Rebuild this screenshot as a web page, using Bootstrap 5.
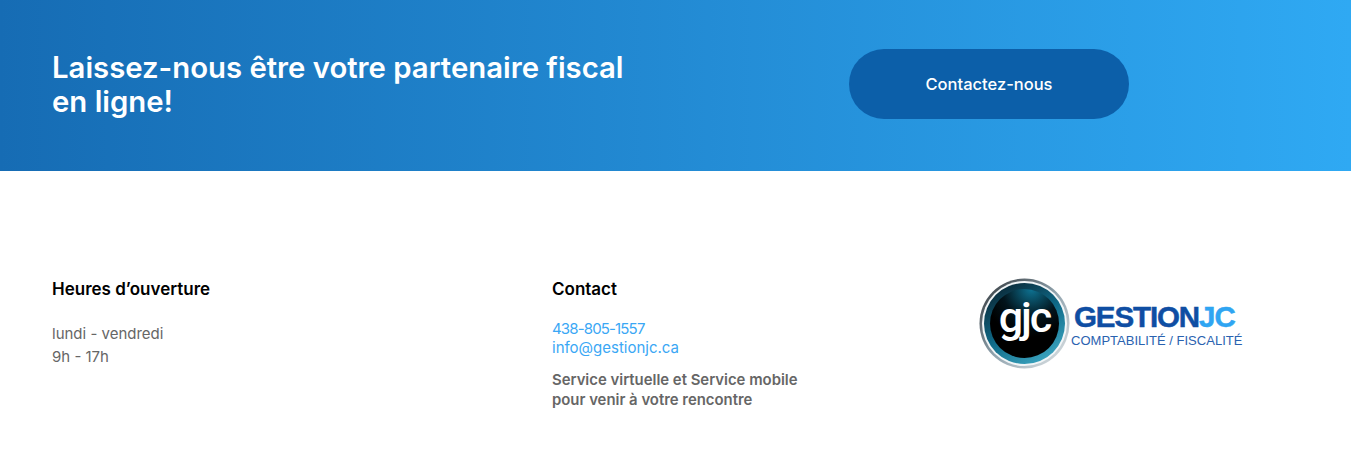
<!DOCTYPE html>
<html lang="fr">
<head>
    <meta charset="UTF-8">
    <meta name="viewport" content="width=device-width, initial-scale=1.0">
    <title>Gestion JC</title>
    <link href="https://cdn.jsdelivr.net/npm/bootstrap@5.3.0/dist/css/bootstrap.min.css" rel="stylesheet">
    <style>
        body {
            font-family: Inter, "Open Sans", "Liberation Sans", sans-serif;
            background: #fff;
            color: #666;
            overflow: hidden;
        }
        .cta-band {
            height: 171px;
            padding: 0 0 3px 52px;
            background: linear-gradient(90deg, #166cb4 0%, #2fa9f3 100%);
        }
        .cta-title-col { width: 797px; padding-top: 2px; }
        .cta-title {
            width: 590px;
            margin: 0;
            color: #fff;
            font-size: 29.3px;
            font-weight: 600;
            line-height: 34px;
        }
        .cta-btn {
            width: 280px;
            height: 70px;
            border: 0;
            border-radius: 35px;
            background: #0c5fa9;
            color: #fff;
            font-size: 16.5px;
            font-weight: 500;
        }
        .foot-area {
            padding: 108px 0 0 52px;
        }
        .foot-hours { width: 500px; }
        .foot-contact { width: 427px; }
        .foot-title {
            margin: 0;
            color: #000;
            font-size: 17px;
            font-weight: 600;
            line-height: 20px;
        }
        .foot-text {
            margin-top: 23px;
            font-size: 15px;
            line-height: 23px;
        }
        .foot-links { margin-top: 20px; }
        .foot-links a {
            display: block;
            color: #3aa7f5;
            font-size: 15px;
            line-height: 19px;
            text-decoration: none;
        }
        .foot-phone { letter-spacing: -.85px; }
        .foot-note {
            margin-top: 13px;
            font-size: 14.9px;
            font-weight: 600;
            line-height: 20px;
        }
        .logo-box {
            margin-top: -1px;
            font-family: "Liberation Sans", Arial, sans-serif;
        }
        .logo-copy { padding-top: 23px; margin-left: 1px; }
        .logo-name {
            margin-left: 3px;
            color: #0f4ea3;
            font-size: 29.5px;
            font-weight: 700;
            line-height: 31px;
            letter-spacing: -1.1px;
            -webkit-text-stroke: .5px currentColor;
        }
        .logo-name span { color: #2fa5f2; }
        .logo-tag {
            margin-top: 1px;
            color: #2a62b0;
            font-size: 13px;
            line-height: 16px;
            letter-spacing: .02px;
        }
    </style>
</head>
<body>
    <section class="cta-band d-flex align-items-center">
        <div class="cta-title-col">
            <h2 class="cta-title">Laissez-nous être votre partenaire fiscal en ligne!</h2>
        </div>
        <button class="cta-btn" type="button">Contactez-nous</button>
    </section>

    <footer class="foot-area d-flex align-items-start">
        <div class="foot-hours">
            <h3 class="foot-title">Heures d’ouverture</h3>
            <p class="foot-text mb-0">lundi - vendredi<br>9h - 17h</p>
        </div>
        <div class="foot-contact">
            <h3 class="foot-title">Contact</h3>
            <div class="foot-links">
                <a class="foot-phone" href="#">438-805-1557</a>
                <a href="#">info@gestionjc.ca</a>
            </div>
            <p class="foot-note mb-0">Service virtuelle et Service mobile<br>pour venir à votre rencontre</p>
        </div>
        <div class="logo-box d-flex align-items-start">
            <svg width="91" height="92" viewBox="0 0 91 92" role="img" aria-label="gjc" class="flex-shrink-0">
                <defs>
                    <linearGradient id="ringOuter" x1="0" y1="0" x2="1" y2="1">
                        <stop offset="0" stop-color="#2b2f33"/>
                        <stop offset=".5" stop-color="#8fa2ad"/>
                        <stop offset="1" stop-color="#e4e8ea"/>
                    </linearGradient>
                    <linearGradient id="ringBlue" x1=".2" y1="0" x2=".8" y2="1">
                        <stop offset="0" stop-color="#0a2634"/>
                        <stop offset=".5" stop-color="#0f6a88"/>
                        <stop offset="1" stop-color="#3fa9c4"/>
                    </linearGradient>
                    <radialGradient id="discFill" cx=".6" cy="0" r=".7">
                        <stop offset="0" stop-color="#0e7393"/>
                        <stop offset=".6" stop-color="#02141c"/>
                        <stop offset="1" stop-color="#000"/>
                    </radialGradient>
                </defs>
                <circle cx="45.5" cy="45.5" r="45" fill="url(#ringOuter)"/>
                <circle cx="45.5" cy="45.5" r="42.5" fill="#f1f5f7"/>
                <circle cx="45.5" cy="45.5" r="40.5" fill="url(#ringBlue)"/>
                <circle cx="45.5" cy="45.5" r="34.5" fill="url(#discFill)"/>
                <text x="45.5" y="54" text-anchor="middle" fill="#fff" font-family="Roboto, sans-serif" font-size="43" font-weight="500" letter-spacing="-2">gjc</text>
            </svg>
            <div class="logo-copy text-nowrap">
                <div class="logo-name">GESTION<span>JC</span></div>
                <div class="logo-tag">COMPTABILITÉ / FISCALITÉ</div>
            </div>
        </div>
    </footer>
    <script src="https://cdn.jsdelivr.net/npm/bootstrap@5.3.0/dist/js/bootstrap.bundle.min.js"></script>
</body>
</html>
